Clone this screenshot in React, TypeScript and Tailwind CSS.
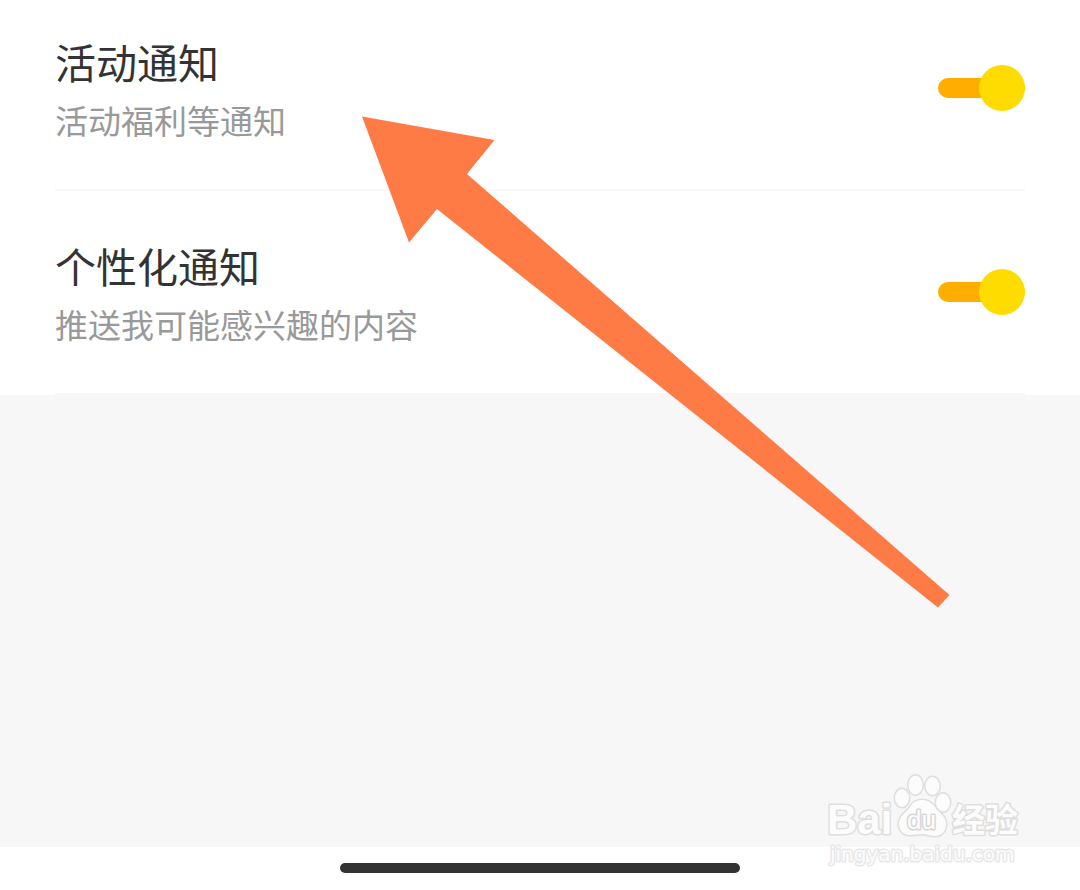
import { useState } from "react";

const items = [
  { id: "activity", title: "活动通知", desc: "活动福利等通知" },
  { id: "personal", title: "个性化通知", desc: "推送我可能感兴趣的内容" },
];

function Toggle({ id }: { id: string }) {
  const [on, setOn] = useState(true);

  return (
    <input
      id={id}
      type="checkbox"
      checked={on}
      onChange={(e) => setOn(e.target.checked)}
      className="relative h-[46px] w-[87px] shrink-0 cursor-pointer appearance-none before:absolute before:top-[13px] before:left-0 before:h-5 before:w-full before:rounded-full before:bg-gray-300 after:absolute after:top-0 after:left-0 after:size-[46px] after:rounded-full after:bg-gray-100 checked:before:bg-[#ffae00] checked:after:right-0 checked:after:left-auto checked:after:bg-[#ffdc00]"
    />
  );
}

function Arrow() {
  return (
    <svg
      className="pointer-events-none absolute top-[116px] left-[362px]"
      width="588"
      height="492"
      viewBox="362 116 588 492"
      aria-hidden="true"
    >
      <path d="M362 116.5 494.5 140 467 174 949.5 595 938 607.5 437 209 409 242.5Z" fill="#ff7b46" />
    </svg>
  );
}

function Watermark() {
  return (
    <svg
      className="pointer-events-none absolute right-14 bottom-[18px]"
      width="200"
      height="104"
      viewBox="824 768 200 104"
      fill="#fcfcfc"
      stroke="#dedede"
      strokeWidth="3"
      strokeLinejoin="round"
      paintOrder="stroke"
      fontFamily="'Liberation Sans', 'Noto Sans CJK SC', sans-serif"
    >
      <text x="827" y="834" fontSize="42" fontWeight="700">
        Bai
      </text>
      {/* paw */}
      <g strokeWidth="3">
        <ellipse cx="902" cy="798" rx="7" ry="9" />
        <ellipse cx="915.5" cy="785" rx="7" ry="9.5" />
        <ellipse cx="932.5" cy="786" rx="7" ry="9" />
        <ellipse cx="943" cy="802.5" rx="7" ry="9" />
        <path d="M922 800c-5 0-9 2-12 7-4 6-11 8-11 17 0 7 5 11 11 11 5 0 8-1 12-1s8 2 13 2c7 0 11-5 11-12 0-8-7-11-11-17-4-5-8-7-13-7Z" />
      </g>
      <text x="907" y="829" fontSize="26" stroke="#d6d6d6">
        du
      </text>
      <text x="952" y="832" fontSize="33" fontWeight="700">
        经验
      </text>
      <text x="830" y="861" fontSize="20" fontFamily="'DejaVu Sans', sans-serif" stroke="#e8e8e8">
        jingyan.baidu.com
      </text>
    </svg>
  );
}

export default function App() {
  return (
    <div className="relative flex min-h-screen flex-col bg-white font-['Noto_Sans_CJK_SC',sans-serif]">
      <main className="flex flex-1 flex-col">
        <ul className="px-[55px]">
          {items.map((item) => (
            <li key={item.id} className="border-b-2 border-[#f7f7f7] py-[42px] first:pt-[29px]">
              <label htmlFor={item.id} className="flex items-center justify-between gap-6">
                <span className="flex flex-col">
                  <span className="text-[41px] leading-[64px] text-[#333]">{item.title}</span>
                  <span className="text-[33px] leading-[54px] text-[#999]">{item.desc}</span>
                </span>
                <Toggle id={item.id} />
              </label>
            </li>
          ))}
        </ul>
        <div className="flex-1 bg-[#f7f7f7]" />
      </main>

      <footer className="flex justify-center pt-4 pb-[17px]">
        <div className="h-2.5 w-[37%] rounded-full bg-[#333]" />
      </footer>

      <Arrow />
      <Watermark />
    </div>
  );
}
